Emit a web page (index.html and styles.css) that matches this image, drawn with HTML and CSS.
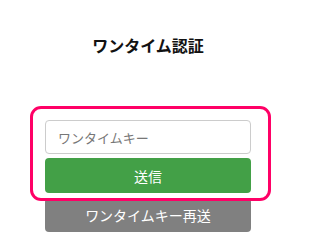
FILE: index.html
```html
<!DOCTYPE html>
<html lang="ja">
<head>
<meta charset="utf-8">
<link rel="stylesheet" href="styles.css">
</head>
<body>
<div class="page">
  <h1 class="title">ワンタイム認証</h1>
  <div class="form">
    <div class="group">
      <input class="key" type="text" placeholder="ワンタイムキー">
      <button class="btn btn-send" type="button">送信</button>
      <div class="highlight"></div>
    </div>
    <button class="btn btn-resend" type="button">ワンタイムキー再送</button>
  </div>
</div>
</body>
</html>
```
FILE: styles.css
```css
html, body {
  margin: 0;
  padding: 0;
  background: #fff;
}
body {
  font-family: "Noto Sans CJK JP", "Noto Sans", sans-serif;
}
.page {
  width: 206px;
  margin-left: 45px;
  padding-top: 34px;
}
.title {
  margin: 0;
  font-size: 16px;
  line-height: 22px;
  font-weight: bold;
  text-align: center;
  color: #111;
}
.form {
  margin-top: 64px;
  display: flex;
  flex-direction: column;
  gap: 5px;
}
.group {
  position: relative;
  display: flex;
  flex-direction: column;
  gap: 4px;
}
.key {
  box-sizing: border-box;
  width: 100%;
  height: 34px;
  margin: 0;
  padding: 0 12px;
  border: 1px solid #ccc;
  border-radius: 4px;
  font-family: inherit;
  font-size: 13px;
  color: #333;
  outline: none;
}
.key::placeholder {
  color: #777;
}
.btn {
  box-sizing: border-box;
  width: 100%;
  height: 35px;
  margin: 0;
  border: none;
  border-radius: 4px;
  font-family: inherit;
  font-size: 14px;
  color: #fff;
  padding: 0;
}
.btn-send {
  background: #43a047;
}
.btn-resend {
  background: #808080;
  height: 34px;
}
.highlight {
  position: absolute;
  top: -14px;
  left: -15px;
  right: -20px;
  bottom: -8px;
  border: 3px solid #ff0066;
  border-radius: 11px;
  pointer-events: none;
  z-index: 2;
}
```
